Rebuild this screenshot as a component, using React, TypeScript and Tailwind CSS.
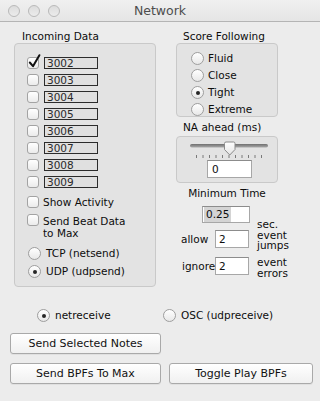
import React from "react";

function Checkbox({ checked = false }: { checked?: boolean }) {
  return (
    <div className="relative w-[12px] h-[12px] shrink-0 rounded-[3px] border border-[#a3a3a3] bg-linear-to-b from-[#ffffff] to-[#ebebeb]">
      {checked && (
        <svg className="absolute left-[0px] top-[-5px]" width="14" height="15" viewBox="0 0 14 15">
          <path d="M1.8 9.5 L5 13.2 L11.4 2.2" fill="none" stroke="#111" strokeWidth="2" strokeLinecap="round" strokeLinejoin="round" />
        </svg>
      )}
    </div>
  );
}

function Radio({ on = false }: { on?: boolean }) {
  return (
    <div className="w-[13px] h-[13px] shrink-0 rounded-full border border-[#9e9e9e] bg-linear-to-b from-[#ffffff] to-[#e8e8e8] flex items-center justify-center">
      {on && <div className="w-[4px] h-[4px] rounded-full bg-[#262626]" />}
    </div>
  );
}

function Port({ n }: { n: string }) {
  return (
    <div className="w-[54px] h-[12px] border border-[#2c2c2c] bg-[#e0e0e0] text-[10.5px] leading-[10px] pl-[2px] text-[#2a2a2a]">
      {n}
    </div>
  );
}

export default function App() {
  const ports = ["3002", "3003", "3004", "3005", "3006", "3007", "3008", "3009"];
  const ticks = Array.from({ length: 11 }, (_, i) => 19.5 + i * 6.5);
  return (
    <div className="w-[320px] h-[401px] overflow-hidden bg-[#ececec] font-['DejaVu_Sans',sans-serif] text-[10.5px] leading-[13px] text-[#0d0d0d] flex flex-col">
      {/* Title bar */}
      <div className="relative h-[22px] shrink-0 bg-linear-to-b from-[#f0f0f0] to-[#e5e5e5] border-b border-[#b4b4b4] flex items-center">
        <div className="flex items-center gap-[8px] pl-[8px]">
          <div className="w-[12px] h-[12px] rounded-full border border-[#b9b9b9] bg-linear-to-b from-[#dcdcdc] to-[#ececec]" />
          <div className="w-[12px] h-[12px] rounded-full border border-[#b9b9b9] bg-linear-to-b from-[#dcdcdc] to-[#ececec]" />
          <div className="w-[12px] h-[12px] rounded-full border border-[#b9b9b9] bg-linear-to-b from-[#dcdcdc] to-[#ececec]" />
        </div>
        <div className="absolute inset-0 flex items-center justify-center text-[12.5px] text-[#4d4d4d]">Network</div>
      </div>

      {/* Top section */}
      <div className="flex pl-[14px] pt-[8px]">
        {/* Left column */}
        <div className="w-[142px] shrink-0">
          <div className="pl-[8px] h-[13px]">Incoming Data</div>
          <div className="h-[244px] rounded-[4px] border border-[#c9c9c9] bg-[#e3e3e3] pl-[12px] pt-[13px] flex flex-col">
            <div className="flex flex-col gap-[5px]">
              {ports.map((p, i) => (
                <div key={p} className="flex items-center h-[12px] gap-[5px]">
                  <Checkbox checked={i === 0} />
                  <Port n={p} />
                </div>
              ))}
            </div>
            <div className="flex items-center h-[12px] gap-[4px] mt-[8px]">
              <Checkbox />
              <span>Show Activity</span>
            </div>
            <div className="flex items-start gap-[4px] mt-[6px]">
              <Checkbox />
              <span className="leading-[12px] mt-[1px]">
                Send Beat Data
                <br />
                to Max
              </span>
            </div>
            <div className="flex items-center gap-[5px] h-[13px] mt-[8px] ml-[1px]">
              <Radio />
              <span>TCP (netsend)</span>
            </div>
            <div className="flex items-center gap-[5px] h-[13px] mt-[5px] ml-[1px]">
              <Radio on />
              <span>UDP (udpsend)</span>
            </div>
          </div>
        </div>

        {/* Right column */}
        <div className="w-[102px] shrink-0 ml-[20px] flex flex-col">
          <div className="pl-[7px] h-[13px]">Score Following</div>
          <div className="h-[74px] rounded-[4px] border border-[#c9c9c9] bg-[#e3e3e3] pl-[14px] pt-[8px] flex flex-col gap-[4px]">
            {["Fluid", "Close", "Tight", "Extreme"].map((t) => (
              <div key={t} className="flex items-center h-[13px] gap-[4px]">
                <Radio on={t === "Tight"} />
                <span>{t}</span>
              </div>
            ))}
          </div>
          <div className="pl-[7px] h-[13px] mt-[4px]">NA ahead (ms)</div>
          <div className="h-[47px] mt-[2px] rounded-[4px] border border-[#c9c9c9] bg-[#e3e3e3] flex flex-col">
            <svg width="100" height="23" viewBox="0 0 100 23">
              <defs>
                <linearGradient id="trk" x1="0" y1="0" x2="0" y2="1">
                  <stop offset="0" stopColor="#6f6f6f" />
                  <stop offset="1" stopColor="#a9a9a9" />
                </linearGradient>
                <linearGradient id="thm" x1="0" y1="0" x2="0" y2="1">
                  <stop offset="0" stopColor="#ffffff" />
                  <stop offset="1" stopColor="#e4e4e4" />
                </linearGradient>
              </defs>
              <rect x="13" y="7" width="78" height="3.5" rx="1.75" fill="url(#trk)" />
              {ticks.map((x) => (
                <line key={x} x1={x} y1="18" x2={x} y2="21" stroke="#7a7a7a" strokeWidth="1" />
              ))}
              <path d="M47.5 6.5 Q47.5 5 49 5 H56.5 Q58 5 58 6.5 V12.5 L52.75 18 L47.5 12.5 Z" fill="url(#thm)" stroke="#8a8a8a" strokeWidth="1" />
            </svg>
            <div className="ml-[30px] w-[45px] h-[18px] bg-white border border-[#a7a7a7] border-t-[#8c8c8c] pl-[4px] flex items-center">0</div>
          </div>
          <div className="text-center mt-[4px] h-[13px] whitespace-nowrap">Minimum Time</div>
          <div className="flex mt-[6px] w-[130px]">
            <div className="w-[74px] shrink-0 flex flex-col">
              <div className="ml-[26px] w-[48px] h-[17px] bg-white border border-[#a7a7a7] border-t-[#8c8c8c] pl-[1px] flex items-center">
                <span className="bg-[#d4d4d4] h-[15px] px-[2px] flex items-center">0.25</span>
              </div>
              <div className="flex items-center mt-[7px] h-[18px]">
                <span className="ml-[5px] w-[34px]">allow</span>
                <div className="w-[34px] h-[18px] bg-white border border-[#a7a7a7] border-t-[#8c8c8c] pl-[3px] flex items-center">2</div>
              </div>
              <div className="flex items-center mt-[9px] h-[18px]">
                <span className="ml-[6px] w-[33px]">ignore</span>
                <div className="w-[34px] h-[18px] bg-white border border-[#a7a7a7] border-t-[#8c8c8c] pl-[3px] flex items-center">2</div>
              </div>
            </div>
            <div className="ml-[7px] flex flex-col leading-[10.5px] whitespace-nowrap">
              <span className="mt-[13px]">sec.</span>
              <span>event</span>
              <span>jumps</span>
              <span className="mt-[6px] leading-[11.5px]">event</span>
              <span className="leading-[11.5px]">errors</span>
            </div>
          </div>
        </div>
      </div>

      {/* Bottom radios */}
      <div className="flex items-center h-[13px] mt-[22px] pl-[37px]">
        <div className="w-[126px] flex items-center gap-[5px]">
          <Radio on />
          <span>netreceive</span>
        </div>
        <div className="flex items-center gap-[5px]">
          <Radio />
          <span>OSC (udpreceive)</span>
        </div>
      </div>

      {/* Buttons */}
      <div className="pl-[10px] mt-[11px]">
        <button className="w-[151px] h-[21px] rounded-[3px] border border-[#a9a9a9] bg-linear-to-b from-[#ffffff] to-[#f0f0f0] text-[11px] text-[#111] shadow-[0_1px_0_rgba(0,0,0,0.05)]">
          Send Selected Notes
        </button>
      </div>
      <div className="pl-[10px] mt-[9px] flex gap-[8px]">
        <button className="w-[151px] h-[21px] rounded-[3px] border border-[#a9a9a9] bg-linear-to-b from-[#ffffff] to-[#f0f0f0] text-[11px] text-[#111] shadow-[0_1px_0_rgba(0,0,0,0.05)]">
          Send BPFs To Max
        </button>
        <button className="w-[144px] h-[21px] rounded-[3px] border border-[#a9a9a9] bg-linear-to-b from-[#ffffff] to-[#f0f0f0] text-[11px] text-[#111] shadow-[0_1px_0_rgba(0,0,0,0.05)]">
          Toggle Play BPFs
        </button>
      </div>
    </div>
  );
}
